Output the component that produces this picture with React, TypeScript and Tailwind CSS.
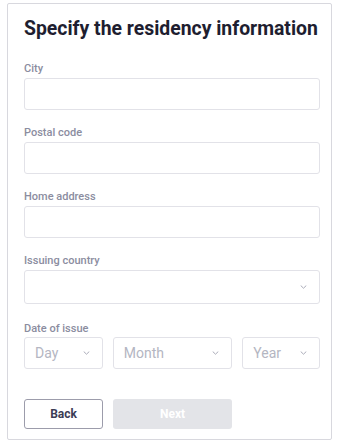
import React from 'react';

const Chevron: React.FC = () => (
  <svg width="7" height="4" viewBox="0 0 7 4" fill="none" stroke="#a9abb8" strokeWidth="1" strokeLinecap="round" strokeLinejoin="round">
    <path d="M1 0.8L3.5 3.2L6 0.8" />
  </svg>
);

const Label: React.FC<{ text: string }> = ({ text }) => (
  <label className="block text-[11px] font-medium text-[#8b8da0] leading-[14px] mb-[2px]">{text}</label>
);

const Field: React.FC<{ label: string; select?: boolean }> = ({ label, select }) => (
  <div>
    <Label text={label} />
    <div className={`${select ? 'h-[34px]' : 'h-[32px]'} border border-[#e2e2e8] rounded-[3px] bg-white flex items-center justify-end pr-[12px]`}>
      {select && <Chevron />}
    </div>
  </div>
);

const DateSelect: React.FC<{ text: string; width: string }> = ({ text, width }) => (
  <div className={`${width} h-[32px] border border-[#e2e2e8] rounded-[3px] flex items-center justify-between pl-[10px] pr-[12px]`}>
    <span className="text-[14px] text-[#b4b6c2]">{text}</span>
    <Chevron />
  </div>
);

export default function App() {
  return (
    <div className="w-[337px] h-[448px] bg-white pt-[3px] pl-[7px]" style={{ fontFamily: 'Roboto, "Liberation Sans", sans-serif' }}>
      <div className="w-[325px] h-[437px] border border-[#d8d8de] rounded-[2px] pl-[16px] pr-[11px] pt-[13px]">
        <h1 className="text-[19.4px] font-bold text-[#1e1e30] leading-[24px] whitespace-nowrap">Specify the residency information</h1>
        <div className="mt-[21px] flex flex-col gap-[16px]">
          <Field label="City" />
          <Field label="Postal code" />
          <Field label="Home address" />
          <Field label="Issuing country" select />
        </div>
        <div className="mt-[18px]">
          <label className="block text-[11px] font-medium text-[#8b8da0] leading-[14px] mb-[1px]">Date of issue</label>
          <div className="flex gap-[10px]">
            <DateSelect text="Day" width="w-[79px]" />
            <DateSelect text="Month" width="w-[120px]" />
            <DateSelect text="Year" width="w-[78px]" />
          </div>
        </div>
        <div className="mt-[30px] flex gap-[10px]">
          <button className="w-[79px] h-[30px] border border-[#9c9cab] rounded-[3px] text-[12px] font-bold text-[#3c3c55]">Back</button>
          <button className="w-[119px] h-[30px] bg-[#e3e4e8] rounded-[3px] text-[12px] font-bold text-white">Next</button>
        </div>
      </div>
    </div>
  );
}
